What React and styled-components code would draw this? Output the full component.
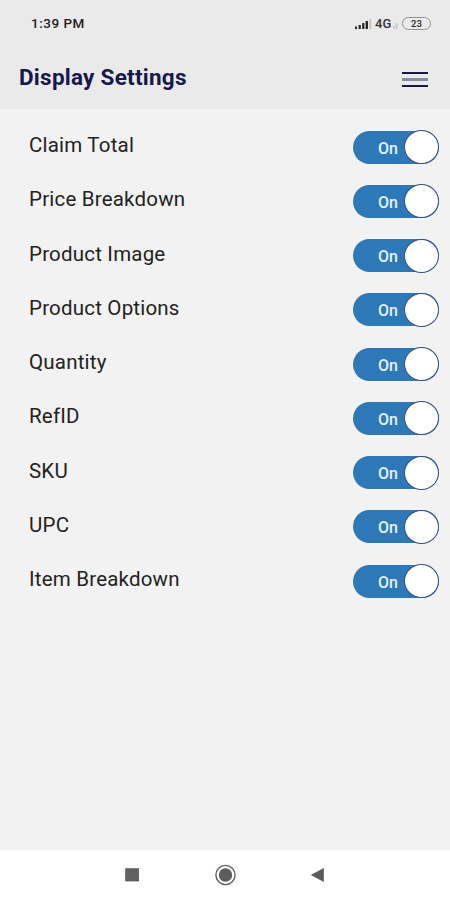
import React, { useState } from "react";
import styled, { createGlobalStyle } from "styled-components";

const GlobalStyle = createGlobalStyle`
  * { box-sizing: border-box; }
  body { margin: 0; background: #f2f2f2; font-family: Roboto, sans-serif; }
`;

const Screen = styled.div`
  width: 450px;
  height: 900px;
  display: flex;
  flex-direction: column;
  overflow: hidden;
  background: #f2f2f2;
`;

const StatusBar = styled.div`
  height: 47px;
  flex: none;
  display: flex;
  justify-content: space-between;
  align-items: center;
  padding: 0 19px 0 31px;
  background: #eaeaea;
`;

const Clock = styled.time`
  font-size: 13.5px;
  line-height: 16px;
  font-weight: 500;
  letter-spacing: 0.5px;
  color: #222;
  padding-bottom: 1px;
`;

const StatusIcons = styled.div`
  display: flex;
  align-items: center;
  height: 16px;
`;

const Network = styled.span`
  margin-left: 3px;
  width: 18px;
  font-size: 13px;
  line-height: 16px;
  font-weight: 500;
  color: #333;
`;

const Battery = styled.span`
  width: 29px;
  height: 13px;
  margin-left: 4px;
  border: 1.5px solid #929292;
  border-radius: 7px;
  font-size: 9.5px;
  line-height: 11px;
  font-weight: 600;
  text-align: center;
  color: #333;
`;

const Header = styled.header`
  height: 62px;
  flex: none;
  display: flex;
  justify-content: space-between;
  align-items: center;
  padding: 0 22px 0 19px;
  background: #eaeaea;
`;

const Title = styled.h1`
  margin: 0 0 2px;
  font-size: 22.5px;
  line-height: 28px;
  font-weight: 700;
  letter-spacing: 0.25px;
  color: #17184b;
`;

const MenuButton = styled.button`
  display: flex;
  flex-direction: column;
  gap: 4px;
  width: 26px;
  margin-top: 3px;
  padding: 0;
  border: 0;
  background: none;
`;

const MenuLine = styled.span`
  height: ${(p) => (p.$soft ? "3px" : "2px")};
  width: 26px;
  background: ${(p) => (p.$soft ? "#8b8aa0" : "#17174b")};
`;

const Settings = styled.main`
  flex: 1;
  padding: 11px 11px 0 29px;
`;

const Row = styled.div`
  height: 54.25px;
  display: flex;
  justify-content: space-between;
  align-items: center;
`;

const Label = styled.span`
  font-size: 20.5px;
  line-height: 24px;
  letter-spacing: 0.2px;
  color: #222;
  padding-bottom: 4px;
`;

const Toggle = styled.button`
  width: 86px;
  height: 33px;
  display: flex;
  flex-direction: ${(p) => (p.$on ? "row" : "row-reverse")};
  align-items: center;
  justify-content: flex-end;
  gap: 6px;
  padding: 0;
  border: 0;
  border-radius: 17px;
  background: ${(p) => (p.$on ? "#2d78b7" : "#9a9a9a")};
  color: #e4f1fb;
  font: 500 16px/20px Roboto, sans-serif;
`;

const ToggleText = styled.span`
  padding-top: 3px;
`;

const Knob = styled.span`
  width: 35px;
  height: 34px;
  flex: none;
  border: 1.25px solid #384d78;
  border-radius: 50%;
  background: #fff;
`;

const NavBar = styled.nav`
  height: 50px;
  flex: none;
  display: flex;
  justify-content: space-between;
  align-items: center;
  padding: 0 124px 0 124px;
  background: #fff;
`;

const OPTIONS = [
  "Claim Total",
  "Price Breakdown",
  "Product Image",
  "Product Options",
  "Quantity",
  "RefID",
  "SKU",
  "UPC",
  "Item Breakdown",
];

function SettingRow({ label }) {
  const [on, setOn] = useState(true);
  return (
    <Row>
      <Label>{label}</Label>
      <Toggle $on={on} role="switch" aria-checked={on} aria-label={label} onClick={() => setOn(!on)}>
        <ToggleText>{on ? "On" : "Off"}</ToggleText>
        <Knob />
      </Toggle>
    </Row>
  );
}

function Signal() {
  return (
    <svg width="18" height="12" viewBox="0 0 18 12">
      <g fill="#252525">
        <rect x="1" y="8.5" width="2" height="2.5" />
        <rect x="4.6" y="7" width="2.2" height="4" />
        <rect x="8.2" y="5" width="2.2" height="6" />
        <rect x="11.6" y="3" width="2.4" height="8" />
      </g>
      <rect x="15.3" y="1" width="2" height="10" fill="#c4c4c4" />
    </svg>
  );
}

function WeakSignal() {
  return (
    <svg width="5" height="12" viewBox="0 0 5 12" fill="#c6c6c6">
      <rect x="0" y="8" width="1.6" height="3" />
      <rect x="2.6" y="5" width="1.8" height="6" />
    </svg>
  );
}

export default function App() {
  return (
    <>
      <GlobalStyle />
      <Screen>
        <StatusBar>
          <Clock>1:39 PM</Clock>
          <StatusIcons>
            <Signal />
            <Network>4G</Network>
            <WeakSignal />
            <Battery>23</Battery>
          </StatusIcons>
        </StatusBar>
        <Header>
          <Title>Display Settings</Title>
          <MenuButton aria-label="Menu">
            <MenuLine />
            <MenuLine $soft />
            <MenuLine />
          </MenuButton>
        </Header>
        <Settings>
          {OPTIONS.map((label) => (
            <SettingRow key={label} label={label} />
          ))}
        </Settings>
        <NavBar>
          <svg width="16" height="22" viewBox="0 0 16 22">
            <rect x="1.7" y="4.7" width="13" height="12.3" fill="#626262" stroke="#505050" strokeWidth="0.7" />
          </svg>
          <svg width="22" height="22" viewBox="0 0 22 22">
            <circle cx="11.5" cy="11" r="9.6" fill="none" stroke="#606060" strokeWidth="1.4" />
            <circle cx="11.5" cy="11" r="6.7" fill="#5c5c5c" />
          </svg>
          <svg width="16" height="22" viewBox="0 0 16 22">
            <path d="M0.8 11 13.8 4v14z" fill="#5a5a5a" />
          </svg>
        </NavBar>
      </Screen>
    </>
  );
}
